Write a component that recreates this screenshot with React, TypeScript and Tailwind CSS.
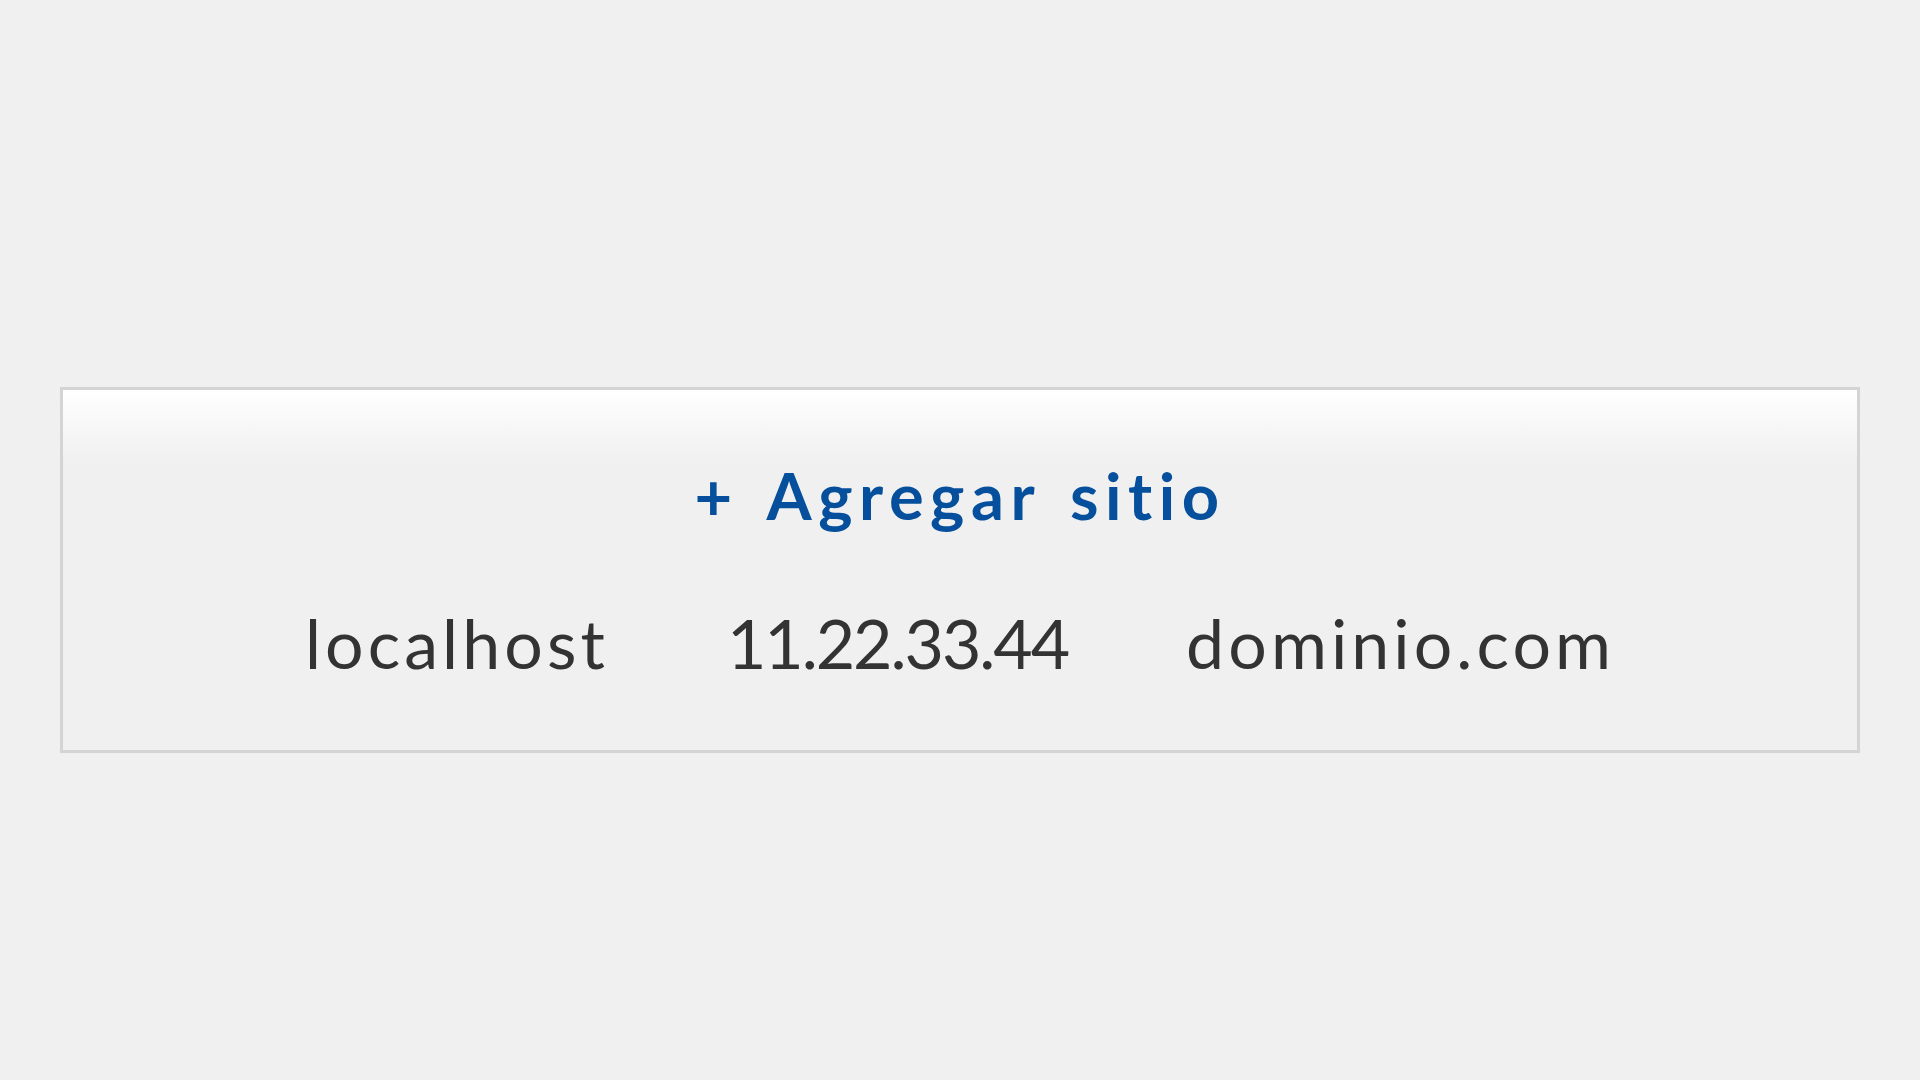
export default function App() {
  const sites = [
    { label: 'localhost', track: 'tracking-[0.06em]' },
    { label: '11.22.33.44', track: 'tracking-[-0.03em]' },
    { label: 'dominio.com', track: 'tracking-[0.06em]' },
  ]

  return (
    <div className="min-h-screen bg-[#f0f0f0] px-[60px] pt-[387px]">
      <div className="border-[3px] border-[#d4d4d4] bg-[linear-gradient(to_bottom,#ffffff,#f0f0f0_70px)] h-[366px] pt-[65px] font-['Lato',sans-serif]">
        <h1 className="text-center text-[65px] leading-[80px] font-bold tracking-[0.1em] [word-spacing:0.12em] text-[#054f9c]">
          + Agregar sitio
        </h1>
        <div className="mt-[68px] flex justify-center gap-[118px] text-[68px] leading-[80px] text-[#333333]">
          {sites.map((s) => (
            <span key={s.label} className={s.track}>
              {s.label}
            </span>
          ))}
        </div>
      </div>
    </div>
  )
}
